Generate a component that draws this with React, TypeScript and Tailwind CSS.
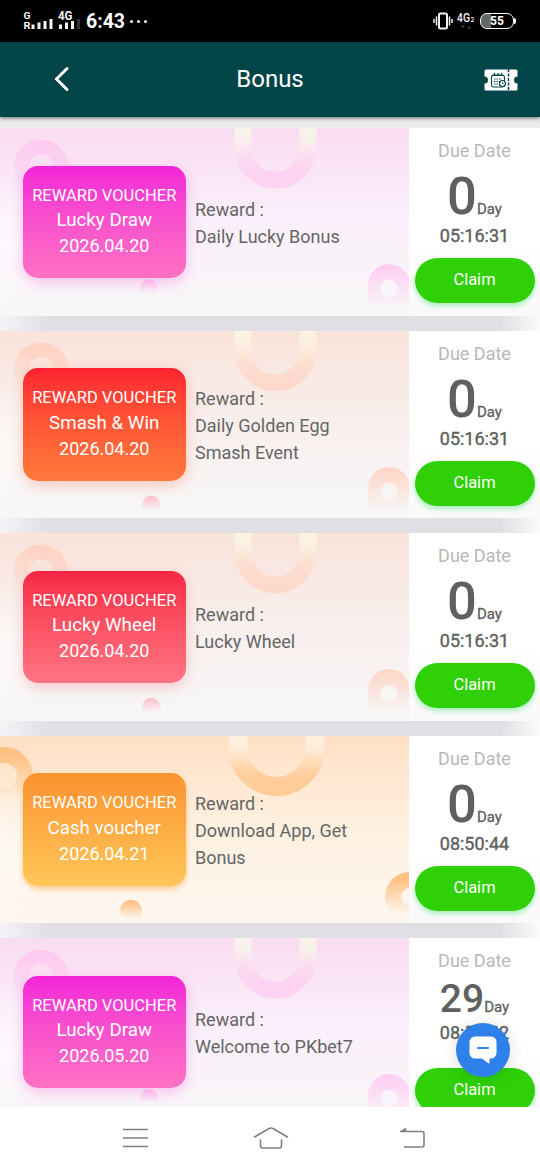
type Theme = 'pink' | 'red' | 'rose' | 'amber';

const themes = {
  pink: {
    card: 'from-[#f9dcf1] via-[#fbf0fb] to-[#f7f7f7]',
    voucher: 'from-[#f323d7] to-[#ff70c2] shadow-[0_4px_14px_rgba(247,80,215,0.32)]',
    ring: '#ffcaf1',
    fade: '#f8f4ea',
    dot: '#ffc0ec',
  },
  red: {
    card: 'from-[#f9e3da] via-[#f8efed] to-[#f7f7f8]',
    voucher: 'from-[#ff1f31] to-[#ff7a3c] shadow-[0_4px_14px_rgba(255,100,60,0.3)]',
    ring: '#ffd3c3',
    fade: '#fbf4e2',
    dot: '#ffb4c6',
  },
  rose: {
    card: 'from-[#f9e3da] via-[#f8efed] to-[#f7f7f8]',
    voucher: 'from-[#f72444] to-[#ff7383] shadow-[0_4px_14px_rgba(250,80,100,0.26)]',
    ring: '#ffd3c3',
    fade: '#fbf4e2',
    dot: '#ffb4c6',
  },
  amber: {
    card: 'from-[#ffe0c4] via-[#fef0e0] to-[#fdf7f0]',
    voucher: 'from-[#fb9230] to-[#fec658] shadow-[0_3px_5px_rgba(252,170,70,0.55)]',
    ring: '#ffc080',
    fade: '#fff0e0',
    dot: '#ffae66',
  },
};

const vouchers: {
  theme: Theme;
  name: string;
  date: string;
  reward: string;
  days: number;
  time: string;
}[] = [
  { theme: 'pink', name: 'Lucky Draw', date: '2026.04.20', reward: 'Daily Lucky Bonus', days: 0, time: '05:16:31' },
  { theme: 'red', name: 'Smash & Win', date: '2026.04.20', reward: 'Daily Golden Egg Smash Event', days: 0, time: '05:16:31' },
  { theme: 'rose', name: 'Lucky Wheel', date: '2026.04.20', reward: 'Lucky Wheel', days: 0, time: '05:16:31' },
  { theme: 'amber', name: 'Cash voucher', date: '2026.04.21', reward: 'Download App, Get Bonus', days: 0, time: '08:50:44' },
  { theme: 'pink', name: 'Lucky Draw', date: '2026.05.20', reward: 'Welcome to PKbet7', days: 29, time: '08:50:42' },
];

function CardArt({ theme, id }: { theme: Theme; id: string }) {
  const t = themes[theme];
  const amber = theme === 'amber';
  return (
    <svg className="absolute inset-0" width="409" height="188" viewBox="0 0 409 188" fill="none">
      <defs>
        <linearGradient id={`${id}-down`} x1="0" y1="0" x2="0" y2="1">
          <stop offset="0" stopColor={t.ring} stopOpacity="0.95" />
          <stop offset="1" stopColor={t.ring} stopOpacity="0" />
        </linearGradient>
        <linearGradient id={`${id}-up`} gradientUnits="userSpaceOnUse" x1="0" y1="0" x2="0" y2="60">
          <stop offset="0" stopColor={t.fade} />
          <stop offset="0.2" stopColor={t.fade} stopOpacity="0.8" />
          <stop offset="0.65" stopColor={t.ring} stopOpacity="0.65" />
          <stop offset="1" stopColor={t.ring} stopOpacity="0.75" />
        </linearGradient>
        <linearGradient id={`${id}-dot`} x1="0" y1="0" x2="0" y2="1">
          <stop offset="0" stopColor={t.dot} stopOpacity="0.85" />
          <stop offset="0.85" stopColor={t.dot} stopOpacity="0" />
        </linearGradient>
      </defs>
      {amber ? (
        <>
          <circle cx="4" cy="40" r="21" stroke={`url(#${id}-down)`} strokeWidth="16" />
          <path d="M238 -2v14a38.500 38.500 0 0 0 77 0v-14" stroke={`url(#${id}-up)`} strokeWidth="19" />
          <circle cx="410" cy="161" r="17" stroke={`url(#${id}-down)`} strokeWidth="16" />
          <circle cx="131" cy="175" r="11" fill={`url(#${id}-dot)`} />
        </>
      ) : (
        <>
          <circle cx="41" cy="39" r="20" stroke={`url(#${id}-down)`} strokeWidth="15" />
          <path d="M243 -2v21.500a32.500 32.500 0 0 0 65 0v-21.500" stroke={`url(#${id}-up)`} strokeWidth="17" />
          {/* flat-sided arch with a round hole */}
          <path
            d="M368 180v-23a21 21 0 0 1 42 0v23zM389 152a8.500 8.500 0 1 0 0 17a8.500 8.500 0 0 0 0-17z"
            fillRule="evenodd"
            fill={`url(#${id}-down)`}
          />
          {theme === 'pink' ? (
            <path d="M140 168v-8a9 9 0 0 1 18 0v8z" fill={`url(#${id}-dot)`} />
          ) : (
            <path d="M142 182v-8a9 9 0 0 1 18.500 0v8z" fill={`url(#${id}-dot)`} />
          )}
        </>
      )}
    </svg>
  );
}

function StatusBar() {
  return (
    <div className="flex h-[42px] shrink-0 items-center justify-between bg-black pr-[24px] pl-[23px] text-white">
      <div className="flex items-center">
        <svg width="60" height="24" viewBox="0 0 60 24" fill="#f3f3f3" className="font-['Roboto'] font-bold">
          <text x="0.500" y="9.500" fontSize="9" textLength="7" lengthAdjust="spacingAndGlyphs">G</text>
          <text x="0.500" y="20" fontSize="8.500" textLength="7" lengthAdjust="spacingAndGlyphs">R</text>
          <rect x="8.500" y="15.500" width="3" height="4.500" />
          <rect x="14.500" y="13.500" width="3" height="6.500" />
          <rect x="20.500" y="12" width="3" height="8" />
          <rect x="26.500" y="10" width="3" height="10" />
          <text x="35" y="11" fontSize="12" textLength="14.500" lengthAdjust="spacingAndGlyphs">4G</text>
          <rect x="36" y="15.500" width="3" height="4.500" />
          <rect x="42" y="13.500" width="3" height="6.500" />
          <rect x="48" y="12" width="3" height="8" />
          <rect x="54" y="10" width="3" height="10" fill="#333" />
        </svg>
        <span className="mt-[2px] ml-[3px] text-[19.5px] leading-6 font-bold">6:43</span>
        <span className="ml-[5px] flex gap-[4px]">
          <i className="size-[3px] rounded-full bg-white" />
          <i className="size-[3px] rounded-full bg-white" />
          <i className="size-[3px] rounded-full bg-white" />
        </span>
      </div>
      <div className="flex items-center">
        <svg width="20" height="18" viewBox="0 0 20 18" fill="none" stroke="#f3f3f3">
          <rect x="6" y="1.500" width="8" height="15" rx="1.500" strokeWidth="2" />
          <path d="M3.500 4.500v9M16.500 4.500v9" strokeWidth="1.500" />
          <path d="M1 7v4M19 7v4" strokeWidth="1.500" />
        </svg>
        <svg width="19" height="20" viewBox="0 0 19 20" fill="#f3f3f3" className="ml-[3px] font-['Roboto'] font-medium">
          <text x="1" y="11" fontSize="12" textLength="13" lengthAdjust="spacingAndGlyphs">4G</text>
          <text x="14.500" y="11" fontSize="6.500">2</text>
          <path d="M5 14h4l-2 4zM11 18h4l-2-4z" fill="#333" />
        </svg>
        <div className="ml-[5px] flex items-center">
          <div className="flex h-4 w-[34px] items-center justify-center rounded-[7px] border-[1.5px] border-white bg-linear-to-r from-[#666] from-30% to-black to-30% text-[12px] leading-none font-bold">
            55
          </div>
          <i className="h-[6px] w-[2px] rounded-r bg-white" />
        </div>
      </div>
    </div>
  );
}

function Header() {
  return (
    <header className="relative z-10 grid h-[75px] shrink-0 grid-cols-3 items-center bg-[#024548] pr-[22px] pl-[52px] text-white shadow-[0_1px_4px_rgba(0,0,0,0.55)]">
      <svg className="-mt-[2px]" width="18" height="26" viewBox="0 0 18 26" fill="none" stroke="#fff" strokeWidth="3" strokeLinecap="round" strokeLinejoin="miter">
        <path d="M15 2.500 4.500 13 15 23.500" />
      </svg>
      <h1 className="-mt-[2px] -ml-[30px] text-center text-[24px] leading-8">Bonus</h1>
      <svg className="justify-self-end" width="34" height="22" viewBox="0 0 34 22" fill="none">
        <path d="M2 .5h30a1.500 1.500 0 0 1 1.500 1.500v5.500a3.500 3.500 0 0 0 0 7V20a1.500 1.500 0 0 1-1.500 1.500H2A1.500 1.500 0 0 1 .5 20v-5.500a3.500 3.500 0 0 0 0-7V2A1.500 1.500 0 0 1 2 .5z" fill="#fff" />
        <path d="M24.500 0v22" stroke="#024548" strokeWidth="1.500" strokeDasharray="3 1.500" />
        <rect x="7.500" y="6" width="13" height="12" rx="2.500" stroke="#024548" strokeWidth="1.100" />
        <path d="M8 6.500h12M10.500 4v3M14 4v3M17.500 4v3" stroke="#024548" strokeWidth="1.200" />
        <path d="M10 10h8M10 12.500h6M10 15h4" stroke="#024548" strokeDasharray="1.500 1" />
        <circle cx="18.500" cy="14.500" r="3" fill="#fff" stroke="#024548" strokeWidth="1.200" />
        <path d="M18.500 13v1.700h1.300" stroke="#024548" strokeWidth=".8" />
      </svg>
    </header>
  );
}

export default function App() {
  return (
    <div className="flex h-[1170px] w-[540px] flex-col overflow-hidden bg-white font-['Roboto',sans-serif]">
      <StatusBar />
      <Header />

      {/* Voucher list */}
      <main className="relative min-h-0 flex-1 overflow-hidden">
        <div className="h-[11px] bg-[#ebebed]" />
        <div className="flex flex-col gap-[15px] bg-[linear-gradient(90deg,#f4f4f7_0,#dfdfe4_50px,#dfdfe4_500px,#fbfbfc_540px)]">
          {vouchers.map((v, i) => (
            <section key={i} className="flex h-[187.5px] shrink-0">
              <div className={`relative flex w-[409px] items-center overflow-hidden bg-linear-to-b pl-[22.5px] ${themes[v.theme].card}`}>
                <CardArt theme={v.theme} id={`art${i}`} />
                <div className="absolute bottom-0 left-0 h-36 w-14 bg-[radial-gradient(ellipse_at_left,rgba(255,255,255,0.6),transparent_70%)]" />
                <div className={`relative h-[112.5px] w-[163.5px] shrink-0 rounded-[15px] bg-linear-to-b pt-[17px] text-center text-white ${themes[v.theme].voucher}`}>
                  <div className="text-[16.5px] leading-[25.5px] whitespace-nowrap">REWARD VOUCHER</div>
                  <div className="text-[18.75px] leading-[25px]">{v.name}</div>
                  <div className="text-[18px] leading-[25px]">{v.date}</div>
                </div>
                <div className="relative mt-[2px] ml-[9px] w-[165px] text-[18px] leading-[27px] text-[#666]">
                  <div>Reward :</div>
                  <div>{v.reward}</div>
                </div>
              </div>
              <div className="flex w-[131px] flex-col items-center bg-linear-to-b from-white from-60% to-[#f9f9f9] pt-[9px] pb-[12.5px] text-[#606060]">
                <div className="text-[18px] leading-[27px] text-[#b8b8b8]">Due Date</div>
                <div className={`flex items-baseline ${v.days > 9 ? 'h-[44.5px]' : 'h-[58px]'}`}>
                  <span
                    className={
                      v.days > 9
                        ? 'text-[39px] leading-[51px] font-medium'
                        : 'text-[52.5px] leading-[65px] font-medium'
                    }
                  >
                    {v.days}
                  </span>
                  <span className="text-[15px] [-webkit-text-stroke:0.3px_#606060]">Day</span>
                </div>
                <div className="text-[18px] leading-[27px] [-webkit-text-stroke:0.4px_#606060]">{v.time}</div>
                <button className="mt-auto h-[45px] w-[120px] shrink-0 rounded-full bg-[#2fd006] text-[16.5px] text-white shadow-[0_3px_5px_rgba(47,220,100,0.4)]">
                  Claim
                </button>
              </div>
            </section>
          ))}
        </div>

        {/* Chat bubble */}
        <button className="absolute right-[30px] bottom-[29.5px] flex size-[54px] items-center justify-center rounded-full bg-[#2f80ea] shadow-[0_2px_16px_rgba(0,0,0,0.14)]">
          <svg width="28" height="28" viewBox="0 0 28 28" fill="none">
            <path d="M6 .5h16a5.500 5.500 0 0 1 5.500 5.500v11a5.500 5.500 0 0 1-5.500 5.500h-1.500v4q0 1.500-1.500.5l-6-4.500H6A5.500 5.500 0 0 1 .5 17V6A5.500 5.500 0 0 1 6 .5z" fill="#fff" />
            <path d="M9 12h10" stroke="#2f80ea" strokeWidth="2.200" strokeLinecap="round" />
          </svg>
        </button>
      </main>

      {/* Android navigation */}
      <nav className="flex h-[63.5px] shrink-0 items-center justify-between bg-white pr-[115px] pl-[123px]">
        <svg width="25" height="20" viewBox="0 0 25 20" fill="none" stroke="#808080" strokeWidth="1.600">
          <path d="M0 1.500h25M0 10h25M0 18.500h25" />
        </svg>
        <svg className="-ml-[5px]" width="36" height="24" viewBox="0 0 36 24" fill="none" stroke="#808080" strokeWidth="1.600" strokeLinecap="round">
          <path d="M1.500 11 16 2.500q2-1 4 0L34.500 11M7.500 14v6q0 2 2 2h17q2 0 2-2v-6" />
        </svg>
        <svg width="26" height="22" viewBox="0 0 26 22" fill="none" stroke="#808080" strokeWidth="1.600">
          <path d="M1 4.500h22q2 0 2 2V18q0 2-2 2H5" />
          <path d="M1 4.500 7 1v3z" fill="#808080" strokeWidth=".5" />
        </svg>
      </nav>
    </div>
  );
}
